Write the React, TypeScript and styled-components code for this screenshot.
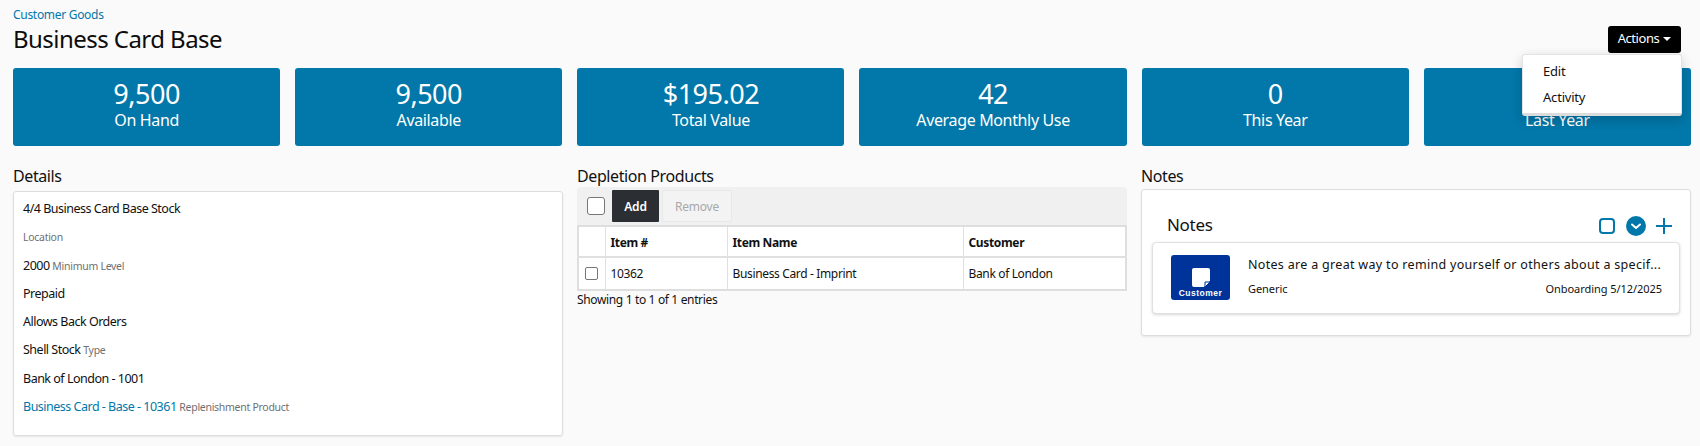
import React from "react";
import styled, { createGlobalStyle } from "styled-components";

const Global = createGlobalStyle`
  html, body { margin: 0; padding: 0; background: #fafafa; }
  body { font-family: "Noto Sans", "Liberation Sans", sans-serif; color: #111; }
  * { box-sizing: border-box; }
`;

const Page = styled.div`
  position: relative;
  width: 1700px;
  height: 446px;
  padding: 7px 9px 0 13px;
  overflow: hidden;
`;
const Header = styled.header`
  height: 61px;
  display: flex;
  justify-content: space-between;
  align-items: flex-start;
`;
const TitleBlock = styled.div`
  display: flex;
  flex-direction: column;
`;
const Crumb = styled.a`
  font-size: 12px;
  line-height: 16px;
  letter-spacing: -0.3px;
  color: #0277a9;
`;
const Title = styled.h1`
  margin: 0;
  font-size: 24px;
  line-height: 32px;
  font-weight: 400;
  letter-spacing: -0.55px;
  color: #0c0c0c;
`;
const ActionsButton = styled.button`
  margin: 19px 10px 0 0;
  width: 73px;
  height: 27px;
  border: 0;
  border-radius: 3px;
  background: #000;
  color: #fff;
  font: 400 13px/22px "Noto Sans", sans-serif;
  letter-spacing: -0.45px;
  display: flex;
  align-items: flex-start;
  justify-content: center;
  gap: 4px;
  padding: 1px 0 0;
`;
const Caret = styled.span`
  width: 0;
  height: 0;
  border-left: 4px solid transparent;
  border-right: 4px solid transparent;
  border-top: 4px solid #fff;
  margin-top: 10px;
`;
const Menu = styled.div`
  position: absolute;
  left: 1522px;
  top: 54px;
  width: 160px;
  height: 62px;
  padding: 3px 0;
  background: #fff;
  border: 1px solid #e2e2e2;
  border-bottom: 3px solid #dcdcdc;
  border-radius: 3px;
  box-shadow: 0 4px 12px rgba(0, 0, 0, 0.18);
  z-index: 3;
`;
const MenuItem = styled.div`
  height: 26px;
  line-height: 26px;
  padding-left: 20px;
  font-size: 13px;
  letter-spacing: -0.2px;
`;
const Stats = styled.section`
  display: grid;
  grid-template-columns: repeat(6, 1fr);
  column-gap: 15px;
`;
const Stat = styled.div`
  height: 78px;
  border-radius: 3px;
  background: #0277a9;
  color: #fff;
  text-align: center;
  padding-top: 11px;
`;
const StatValue = styled.div`
  min-height: 30px;
  font-size: 27px;
  line-height: 30px;
  letter-spacing: -0.5px;
`;
const StatLabel = styled.div`
  font-size: 16px;
  line-height: 22px;
  letter-spacing: -0.35px;
`;
const Columns = styled.section`
  display: grid;
  grid-template-columns: repeat(3, 1fr);
  column-gap: 14px;
  margin-top: 19px;
`;
const Column = styled.div`
  display: flex;
  flex-direction: column;
`;
const SectionTitle = styled.h2`
  margin: 0;
  height: 22px;
  font-size: 16px;
  line-height: 22px;
  font-weight: 400;
  letter-spacing: -0.4px;
`;
const Panel = styled.div`
  background: #fff;
  border: 1px solid #ddd;
  border-radius: 3px;
  box-shadow: 0 1px 2px rgba(0, 0, 0, 0.08);
`;
const DetailsPanel = styled(Panel)`
  margin-top: 4px;
  height: 245px;
  padding: 3px 9px;
`;
const DetailRow = styled.div`
  height: 28.3px;
  line-height: 28px;
  font-size: 12.5px;
  letter-spacing: -0.5px;
  white-space: nowrap;
`;
const Hint = styled.span`
  font-size: 10.5px;
  color: #6f6f6f;
  letter-spacing: -0.28px;
`;
const DetailLink = styled.a`
  color: #0277a9;
`;
const Toolbar = styled.div`
  height: 38px;
  background: #f0f0f0;
  border-radius: 4px 4px 0 0;
  display: flex;
  align-items: center;
  padding-left: 10px;
`;
const BigCheck = styled.span`
  width: 18px;
  height: 18px;
  background: #fff;
  border: 1px solid #777;
  border-radius: 3px;
  margin-right: 7px;
`;
const AddButton = styled.button`
  width: 47px;
  height: 32px;
  border: 0;
  background: #2b2f33;
  color: #fff;
  font: 600 12px "Noto Sans", sans-serif;
  letter-spacing: -0.2px;
  padding: 0;
  border-radius: 1px;
`;
const RemoveButton = styled.button`
  width: 70px;
  height: 32px;
  margin-left: 3px;
  border: 1px solid #e8e8e8;
  background: #f3f3f3;
  color: #a8a8a8;
  font: 400 12px "Noto Sans", sans-serif;
  letter-spacing: -0.2px;
  padding: 0;
  border-radius: 2px;
`;
const Table = styled.table`
  width: 100%;
  border-collapse: collapse;
  table-layout: fixed;
  background: #fff;
  border: 2px solid #dedede;
  font-size: 12px;
  letter-spacing: -0.35px;
`;
const Th = styled.th<{ $w?: number }>`
  width: ${(p) => (p.$w ? `${p.$w}px` : "auto")};
  height: 31px;
  padding: 2px 0 0 5px;
  text-align: left;
  font-weight: 700;
  border: 1px solid #e0e0e0;
  border-bottom-width: 2px;
`;
const Td = styled.td`
  height: 33px;
  padding: 0 0 0 5px;
  border: 1px solid #e0e0e0;
`;
const SmallCheck = styled.span`
  display: block;
  width: 13px;
  height: 13px;
  margin-left: 1px;
  border: 1px solid #777;
  border-radius: 2px;
  background: #fff;
`;
const Showing = styled.div`
  margin-top: 1px;
  font-size: 12px;
  line-height: 16px;
  letter-spacing: -0.35px;
`;
const NotesPanel = styled(Panel)`
  margin-top: 2px;
  height: 147px;
  padding: 10px 10px 0;
`;
const NotesHead = styled.div`
  height: 42px;
  display: flex;
  align-items: center;
  justify-content: space-between;
  padding: 6px 8px 0 15px;
`;
const NotesTitle = styled.div`
  font-size: 17px;
  letter-spacing: -0.3px;
`;
const IconRow = styled.div`
  display: flex;
  align-items: center;
  margin-top: 3px;
`;
const IconSlot = styled.span<{ $gap?: number }>`
  display: flex;
  margin-left: ${(p) => p.$gap ?? 0}px;
`;
const NoteCard = styled.div`
  display: flex;
  height: 72px;
  padding: 12px 17px 0 18px;
  background: #fff;
  border: 1px solid #e0e0e0;
  border-radius: 4px;
  box-shadow: 0 1px 3px rgba(0, 0, 0, 0.16);
`;
const NoteLogo = styled.div`
  width: 59px;
  height: 45px;
  border-radius: 3px;
  background: #00339a;
  color: #fff;
  display: flex;
  flex-direction: column;
  align-items: center;
  justify-content: flex-end;
  flex: none;
  padding-bottom: 2px;
`;
const LogoText = styled.span`
  font: 700 8.5px/10px "Liberation Sans", sans-serif;
  letter-spacing: 0.5px;
`;
const NoteBody = styled.div`
  flex: 1;
  min-width: 0;
  margin-left: 18px;
`;
const NoteText = styled.div`
  font-size: 12.5px;
  line-height: 20px;
  letter-spacing: 0.31px;
  white-space: nowrap;
`;
const NoteMeta = styled.div`
  margin-top: 6px;
  display: flex;
  justify-content: space-between;
  font-size: 11px;
  line-height: 15px;
  letter-spacing: -0.05px;
`;

const stats = [
  ["9,500", "On Hand"],
  ["9,500", "Available"],
  ["$195.02", "Total Value"],
  ["42", "Average Monthly Use"],
  ["0", "This Year"],
  ["", "Last Year"],
];

const StickyNote = () => (
  <svg width="20" height="21" viewBox="0 0 20 21">
    <path d="M3 1h14a2 2 0 0 1 2 2v11l-6 6H3a2 2 0 0 1-2-2V3a2 2 0 0 1 2-2z" fill="#fff" />
    <path d="M14 20v-5h5z" fill="#fff" stroke="#00339a" strokeWidth="1" />
  </svg>
);

const SquareIcon = () => (
  <svg width="16" height="16" viewBox="0 0 16 16">
    <rect x="1" y="1" width="14" height="14" rx="3" fill="none" stroke="#0277a9" strokeWidth="2" />
  </svg>
);
const ChevronCircle = () => (
  <svg width="20" height="20" viewBox="0 0 20 20">
    <circle cx="10" cy="10" r="10" fill="#0277a9" />
    <path d="M6 8.5l4 3.5 4-3.5" fill="none" stroke="#fff" strokeWidth="2" strokeLinecap="round" strokeLinejoin="round" />
  </svg>
);
const PlusIcon = () => (
  <svg width="16" height="16" viewBox="0 0 16 16">
    <path d="M8 0v16M0 8h16" fill="none" stroke="#0277a9" strokeWidth="2" />
  </svg>
);

export default function App() {
  return (
    <Page>
      <Global />
      <Header>
        <TitleBlock>
          <Crumb>Customer Goods</Crumb>
          <Title>Business Card Base</Title>
        </TitleBlock>
        <ActionsButton>
          Actions <Caret />
        </ActionsButton>
      </Header>
      <Menu>
        <MenuItem>Edit</MenuItem>
        <MenuItem>Activity</MenuItem>
      </Menu>
      <Stats>
        {stats.map(([v, l]) => (
          <Stat key={l}>
            <StatValue>{v}</StatValue>
            <StatLabel>{l}</StatLabel>
          </Stat>
        ))}
      </Stats>
      <Columns>
        <Column>
          <SectionTitle>Details</SectionTitle>
          <DetailsPanel>
            <DetailRow>4/4 Business Card Base Stock</DetailRow>
            <DetailRow>
              <Hint>Location</Hint>
            </DetailRow>
            <DetailRow>
              2000 <Hint>Minimum Level</Hint>
            </DetailRow>
            <DetailRow>Prepaid</DetailRow>
            <DetailRow>Allows Back Orders</DetailRow>
            <DetailRow>
              Shell Stock <Hint>Type</Hint>
            </DetailRow>
            <DetailRow>Bank of London - 1001</DetailRow>
            <DetailRow>
              <DetailLink>Business Card - Base - 10361</DetailLink> <Hint>Replenishment Product</Hint>
            </DetailRow>
          </DetailsPanel>
        </Column>
        <Column>
          <SectionTitle>Depletion Products</SectionTitle>
          <Toolbar>
            <BigCheck />
            <AddButton>Add</AddButton>
            <RemoveButton>Remove</RemoveButton>
          </Toolbar>
          <Table>
            <thead>
              <tr>
                <Th $w={27} />
                <Th $w={122}>Item #</Th>
                <Th $w={236}>Item Name</Th>
                <Th>Customer</Th>
              </tr>
            </thead>
            <tbody>
              <tr>
                <Td>
                  <SmallCheck />
                </Td>
                <Td>10362</Td>
                <Td>Business Card - Imprint</Td>
                <Td>Bank of London</Td>
              </tr>
            </tbody>
          </Table>
          <Showing>Showing 1 to 1 of 1 entries</Showing>
        </Column>
        <Column>
          <SectionTitle>Notes</SectionTitle>
          <NotesPanel>
            <NotesHead>
              <NotesTitle>Notes</NotesTitle>
              <IconRow>
                <IconSlot>
                  <SquareIcon />
                </IconSlot>
                <IconSlot $gap={11}>
                  <ChevronCircle />
                </IconSlot>
                <IconSlot $gap={10}>
                  <PlusIcon />
                </IconSlot>
              </IconRow>
            </NotesHead>
            <NoteCard>
              <NoteLogo>
                <StickyNote />
                <LogoText>Customer</LogoText>
              </NoteLogo>
              <NoteBody>
                <NoteText>Notes are a great way to remind yourself or others about a specif...</NoteText>
                <NoteMeta>
                  <span>Generic</span>
                  <span>Onboarding 5/12/2025</span>
                </NoteMeta>
              </NoteBody>
            </NoteCard>
          </NotesPanel>
        </Column>
      </Columns>
    </Page>
  );
}
